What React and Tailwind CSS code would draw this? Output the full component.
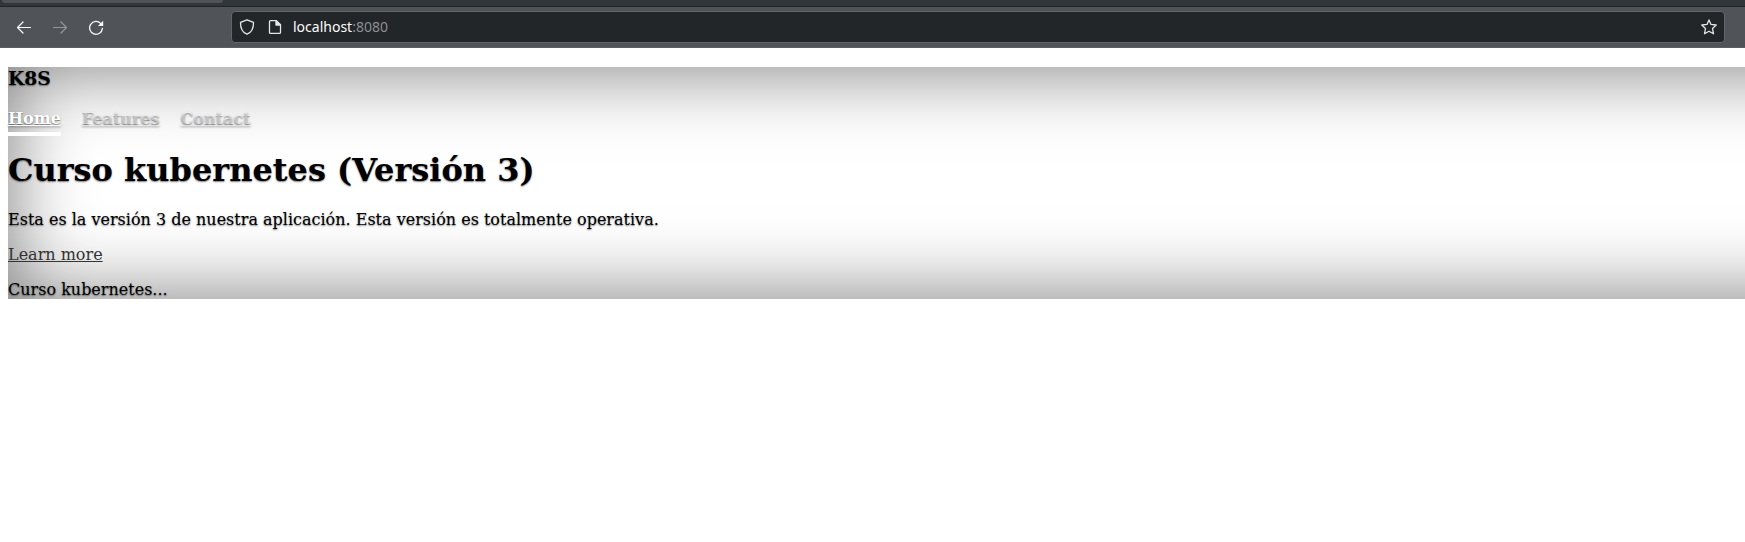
function BrowserBar() {
  return (
    <header className="flex h-12 flex-col bg-[#505458] font-['Noto_Sans',sans-serif]">
      <div className="h-[7px] shrink-0 border-b border-[#202427] bg-[#31363b] pl-0.5">
        <div className="h-[3px] w-[221px] rounded-b-[3px] bg-[#505458]" />
      </div>
      <div className="flex h-[41px] items-start border-b border-[#5c5f64] pt-1 pr-5">
        <div className="flex w-[231px] shrink-0 items-center gap-5 pt-2 pl-4 text-[#fbfbfe]">
          <svg className="size-4" viewBox="0 0 16 16" fill="none" stroke="currentColor" strokeWidth="1.2" strokeLinecap="round" strokeLinejoin="round">
            <path d="M14.5 8.5H1.5M7 3L1.5 8.5L7 14" />
          </svg>
          <svg className="size-4 opacity-40" viewBox="0 0 16 16" fill="none" stroke="currentColor" strokeWidth="1.2" strokeLinecap="round" strokeLinejoin="round">
            <path d="M1.5 8.5H14.5M9 3L14.5 8.5L9 14" />
          </svg>
          <svg className="size-4" viewBox="0 0 16 16" fill="none" stroke="currentColor" strokeWidth="1.3" strokeLinecap="round">
            <path d="M12.8 4.6A6.4 6.4 0 1 0 14.4 9.4" />
            <path d="M15.2 1.8V7H10Z" fill="currentColor" stroke="none" />
          </svg>
        </div>
        <div className="flex h-8 grow items-center rounded-[4px] border border-[#63676b] bg-[#232629] px-[7px] text-[#e6e6e8]">
          <svg className="size-4" viewBox="0 0 16 16" fill="none" stroke="currentColor" strokeWidth="1.3" strokeLinejoin="round">
            <path d="M8 0.8L14.5 3.4C14.6 8.6 13.4 13 8 15.2C2.6 13 1.4 8.6 1.5 3.4Z" />
          </svg>
          <svg className="ml-3 size-4" viewBox="0 0 16 16" fill="none" stroke="currentColor" strokeWidth="1.3" strokeLinejoin="round">
            <path d="M3.5 1.6H9.3L13.5 5.8V13.4Q13.5 14.4 12.5 14.4H3.5Q2.5 14.4 2.5 13.4V2.6Q2.5 1.6 3.5 1.6Z" />
            <path d="M9 1.6L13.5 6H9Z" fill="currentColor" />
          </svg>
          <span className="ml-[10px] text-[14px] leading-5 text-[#fcfcfc]">
            localhost<span className="text-[#8d9093]">:8080</span>
          </span>
          <svg className="ml-auto size-4" viewBox="0 0 16 16" fill="none" stroke="currentColor" strokeWidth="1.3" strokeLinejoin="round">
            <path d="M8 0.9L10 5.4L15.2 6L11.5 9.5L12.5 14.8L8 12.3L3.5 14.8L4.5 9.5L0.8 6L6 5.4Z" />
          </svg>
        </div>
      </div>
    </header>
  );
}

const links = ["Features", "Contact"];

export default function App() {
  return (
    <div className="h-[542px] overflow-hidden bg-white">
      <BrowserBar />
      <div className="mt-[19px] -mr-[100px] ml-2 h-[232px] font-['DejaVu_Serif',serif] text-[16px] leading-[19px] text-black shadow-[inset_0_0_5rem_rgba(0,0,0,0.54)] [text-shadow:0_.05rem_.1rem_rgba(0,0,0,.5)]">
        <h3 className="text-[18.72px] leading-[22px] font-bold">K8S</h3>
        <nav className="mt-5 flex h-[19px] gap-[21px] font-bold text-white/50">
          <a className="h-[27px] border-b-4 border-white text-white underline underline-offset-1 [text-decoration-skip-ink:none]">Home</a>
          {links.map((label) => (
            <a key={label} className="underline underline-offset-1">{label}</a>
          ))}
        </nav>
        <h1 className="mt-[23px] text-[32px] leading-[38px] font-bold">Curso kubernetes (Versión 3)</h1>
        <p className="mt-[21px]">Esta es la versión 3 de nuestra aplicación. Esta versión es totalmente operativa.</p>
        <p className="mt-4">
          <a className="text-[#333] underline underline-offset-1 [text-shadow:none]">Learn more</a>
        </p>
        <p className="mt-4">Curso kubernetes...</p>
      </div>
    </div>
  );
}
